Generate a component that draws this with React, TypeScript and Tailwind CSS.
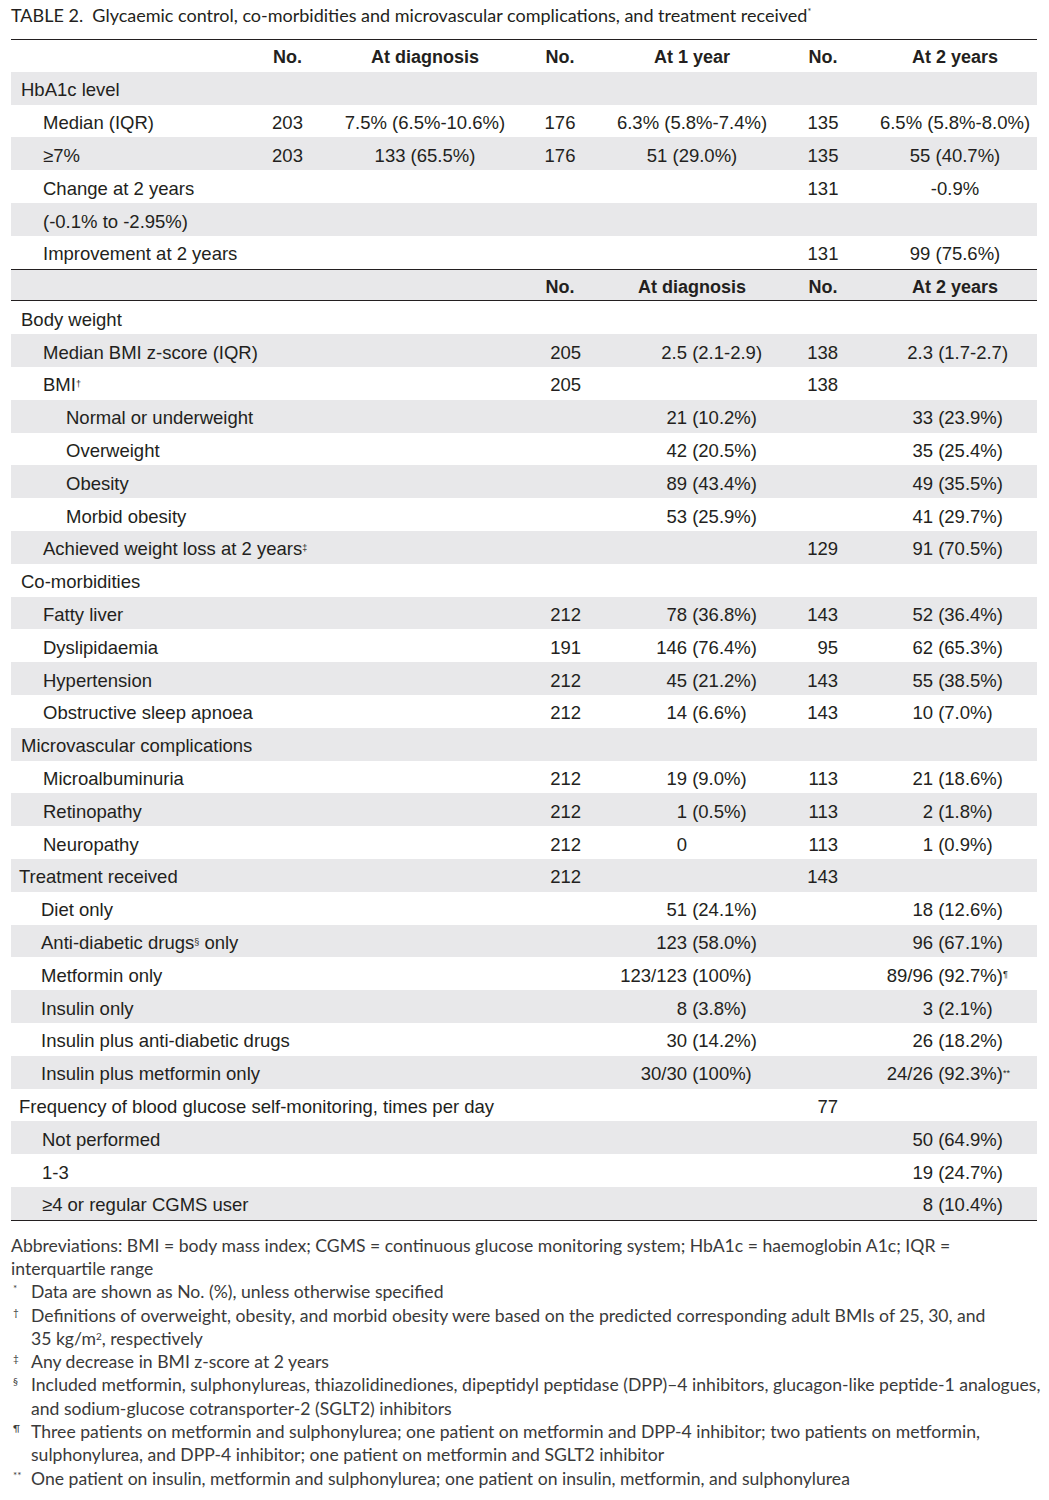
import type { ReactNode } from 'react'

type Val = string | { v: string; sup: string }
type Row =
  | { kind: 'head1' }
  | { kind: 'head2' }
  | { kind: 'a'; label: ReactNode; x: number; cells: Val[] }
  | { kind: 'b'; label: ReactNode; x: number; cells: Val[] }

const body = "font-[family-name:'Liberation_Sans',Arial,sans-serif]"
const gill = "font-[family-name:'Lato','Open_Sans',sans-serif]"

const rows: Row[] = [
  { kind: 'head1' },
  { kind: 'a', label: 'HbA1c level', x: 10, cells: ['', '', '', '', '', ''] },
  { kind: 'a', label: 'Median (IQR)', x: 32, cells: ['203', '7.5% (6.5%-10.6%)', '176', '6.3% (5.8%-7.4%)', '135', '6.5% (5.8%-8.0%)'] },
  { kind: 'a', label: '≥7%', x: 32, cells: ['203', '133 (65.5%)', '176', '51 (29.0%)', '135', '55 (40.7%)'] },
  { kind: 'a', label: 'Change at 2 years', x: 32, cells: ['', '', '', '', '131', '-0.9%'] },
  { kind: 'a', label: '(-0.1% to -2.95%)', x: 32, cells: ['', '', '', '', '', ''] },
  { kind: 'a', label: 'Improvement at 2 years', x: 32, cells: ['', '', '', '', '131', '99 (75.6%)'] },
  { kind: 'head2' },
  { kind: 'b', label: 'Body weight', x: 10, cells: ['', '', '', ''] },
  { kind: 'b', label: 'Median BMI z-score (IQR)', x: 32, cells: ['205', '2.5 (2.1-2.9)', '138', '2.3 (1.7-2.7)'] },
  { kind: 'b', label: <>BMI<sup className="text-[9px]">†</sup></>, x: 32, cells: ['205', '', '138', ''] },
  { kind: 'b', label: 'Normal or underweight', x: 55, cells: ['', '21 (10.2%)', '', '33 (23.9%)'] },
  { kind: 'b', label: 'Overweight', x: 55, cells: ['', '42 (20.5%)', '', '35 (25.4%)'] },
  { kind: 'b', label: 'Obesity', x: 55, cells: ['', '89 (43.4%)', '', '49 (35.5%)'] },
  { kind: 'b', label: 'Morbid obesity', x: 55, cells: ['', '53 (25.9%)', '', '41 (29.7%)'] },
  { kind: 'b', label: <>Achieved weight loss at 2 years<sup className="text-[9px]">‡</sup></>, x: 32, cells: ['', '', '129', '91 (70.5%)'] },
  { kind: 'b', label: 'Co-morbidities', x: 10, cells: ['', '', '', ''] },
  { kind: 'b', label: 'Fatty liver', x: 32, cells: ['212', '78 (36.8%)', '143', '52 (36.4%)'] },
  { kind: 'b', label: 'Dyslipidaemia', x: 32, cells: ['191', '146 (76.4%)', '95', '62 (65.3%)'] },
  { kind: 'b', label: 'Hypertension', x: 32, cells: ['212', '45 (21.2%)', '143', '55 (38.5%)'] },
  { kind: 'b', label: 'Obstructive sleep apnoea', x: 32, cells: ['212', '14 (6.6%)', '143', '10 (7.0%)'] },
  { kind: 'b', label: 'Microvascular complications', x: 10, cells: ['', '', '', ''] },
  { kind: 'b', label: 'Microalbuminuria', x: 32, cells: ['212', '19 (9.0%)', '113', '21 (18.6%)'] },
  { kind: 'b', label: 'Retinopathy', x: 32, cells: ['212', '1 (0.5%)', '113', '2 (1.8%)'] },
  { kind: 'b', label: 'Neuropathy', x: 32, cells: ['212', '0', '113', '1 (0.9%)'] },
  { kind: 'b', label: 'Treatment received', x: 8, cells: ['212', '', '143', ''] },
  { kind: 'b', label: 'Diet only', x: 30, cells: ['', '51 (24.1%)', '', '18 (12.6%)'] },
  { kind: 'b', label: <>Anti-diabetic drugs<sup className="text-[9px]">§</sup> only</>, x: 30, cells: ['', '123 (58.0%)', '', '96 (67.1%)'] },
  { kind: 'b', label: 'Metformin only', x: 30, cells: ['', '123/123 (100%)', '', { v: '89/96 (92.7%)', sup: '¶' }] },
  { kind: 'b', label: 'Insulin only', x: 30, cells: ['', '8 (3.8%)', '', '3 (2.1%)'] },
  { kind: 'b', label: 'Insulin plus anti-diabetic drugs', x: 30, cells: ['', '30 (14.2%)', '', '26 (18.2%)'] },
  { kind: 'b', label: 'Insulin plus metformin only', x: 30, cells: ['', '30/30 (100%)', '', { v: '24/26 (92.3%)', sup: '**' }] },
  { kind: 'b', label: 'Frequency of blood glucose self-monitoring, times per day', x: 8, cells: ['', '', '77', ''] },
  { kind: 'b', label: 'Not performed', x: 31, cells: ['', '', '', '50 (64.9%)'] },
  { kind: 'b', label: '1-3', x: 31, cells: ['', '', '', '19 (24.7%)'] },
  { kind: 'b', label: '≥4 or regular CGMS user', x: 31, cells: ['', '', '', '8 (10.4%)'] },
]

// number right-aligned to a tab stop, the bracket part follows
function Tabbed({ val, stop }: { val: Val; stop: number }) {
  const text = typeof val === 'string' ? val : val.v
  const sup = typeof val === 'string' ? '' : val.sup
  if (!text) return <div />
  const i = text.indexOf(' ')
  const num = i < 0 ? text : text.slice(0, i)
  const rest = i < 0 ? '' : text.slice(i)
  return (
    <div className="flex items-baseline whitespace-pre">
      <span className="text-right shrink-0" style={{ width: stop }}>{num}</span>
      <span>
        {rest}
        {sup && <sup className="text-[9px]">{sup}</sup>}
      </span>
    </div>
  )
}

const cols = 'grid grid-cols-[244px_65px_210px_60px_204px_58px_21px_164px] items-center h-[32.8px] pt-[4px]'

function TableRow({ row, i }: { row: Row; i: number }) {
  const bg = i % 2 === 1 ? 'bg-[#e8e8ea]' : ''
  if (row.kind === 'head1') {
    return (
      <div className={`${cols} border-t border-[#231f20] font-bold text-[18px]`}>
        <div />
        <div className="text-center">No.</div>
        <div className="text-center">At diagnosis</div>
        <div className="text-center">No.</div>
        <div className="text-center">At 1 year</div>
        <div className="text-center">No.</div>
        <div className="col-span-2 text-center pl-[21px]">At 2 years</div>
      </div>
    )
  }
  if (row.kind === 'head2') {
    return (
      <div className={`${cols} ${bg} border-y border-[#231f20] font-bold text-[18px]`}>
        <div className="col-span-3" />
        <div className="text-center">No.</div>
        <div className="text-center">At diagnosis</div>
        <div className="text-center">No.</div>
        <div className="col-span-2 text-center pl-[21px]">At 2 years</div>
      </div>
    )
  }
  if (row.kind === 'a') {
    const c = row.cells as string[]
    return (
      <div className={`${cols} ${bg}`}>
        <div style={{ paddingLeft: row.x }} className="whitespace-nowrap">{row.label}</div>
        <div className="text-center">{c[0]}</div>
        <div className="text-center">{c[1]}</div>
        <div className="text-center">{c[2]}</div>
        <div className="text-center">{c[3]}</div>
        <div className="text-center">{c[4]}</div>
        <div className="col-span-2 text-center pl-[21px]">{c[5]}</div>
      </div>
    )
  }
  const c = row.cells
  return (
    <div className={`${cols} ${bg}`}>
      <div style={{ paddingLeft: row.x }} className="col-span-3 whitespace-nowrap">{row.label}</div>
      <div className="text-right pr-[9px]">{c[0] as string}</div>
      <Tabbed val={c[1]} stop={97} />
      <div className="text-right pr-[14px]">{c[2] as string}</div>
      <div className="col-span-2">
        <Tabbed val={c[3]} stop={81} />
      </div>
    </div>
  )
}

const notes: { mark: string; text: ReactNode }[] = [
  { mark: '*', text: 'Data are shown as No. (%), unless otherwise specified' },
  {
    mark: '†',
    text: (
      <>
        Definitions of overweight, obesity, and morbid obesity were based on the predicted corresponding adult BMIs of 25, 30, and
        <br />
        35 kg/m<sup className="text-[10px]">2</sup>, respectively
      </>
    ),
  },
  { mark: '‡', text: 'Any decrease in BMI z-score at 2 years' },
  {
    mark: '§',
    text: (
      <>
        Included metformin, sulphonylureas, thiazolidinediones, dipeptidyl peptidase (DPP)–4 inhibitors, glucagon-like peptide-1 analogues,
        <br />
        and sodium-glucose cotransporter-2 (SGLT2) inhibitors
      </>
    ),
  },
  {
    mark: '¶',
    text: (
      <>
        Three patients on metformin and sulphonylurea; one patient on metformin and DPP-4 inhibitor; two patients on metformin,
        <br />
        sulphonylurea, and DPP-4 inhibitor; one patient on metformin and SGLT2 inhibitor
      </>
    ),
  },
  { mark: '**', text: 'One patient on insulin, metformin and sulphonylurea; one patient on insulin, metformin, and sulphonylurea' },
]

export default function App() {
  return (
    <div className="w-[1049px] h-[1500px] bg-white text-[#231f20] px-[11px] pt-[5px]">
      <h1 className={`${gill} text-[18px] leading-[20px] mb-[14px] whitespace-nowrap`}>
        TABLE 2.&nbsp; Glycaemic control, co-morbidities and microvascular complications, and treatment received
        <sup className="text-[9px] top-[-0.8em]">*</sup>
      </h1>

      <div className={`${body} text-[18.5px] w-[1026px]`}>
        {rows.map((r, i) => (
          <TableRow key={i} row={r} i={i} />
        ))}
        <div className="border-t border-[#231f20]" />
      </div>

      <div className={`${gill} text-[17.6px] leading-[23.3px] text-[#3a3a3a] mt-[13px] whitespace-nowrap`}>
        <p>
          Abbreviations: BMI = body mass index; CGMS = continuous glucose monitoring system; HbA1c = haemoglobin A1c; IQR =
          <br />
          interquartile range
        </p>
        {notes.map(n => (
          <div key={n.mark} className="flex">
            <span className="w-[20px] shrink-0 pl-[2px] text-[10px] leading-[16px]">{n.mark}</span>
            <p>{n.text}</p>
          </div>
        ))}
      </div>
    </div>
  )
}
